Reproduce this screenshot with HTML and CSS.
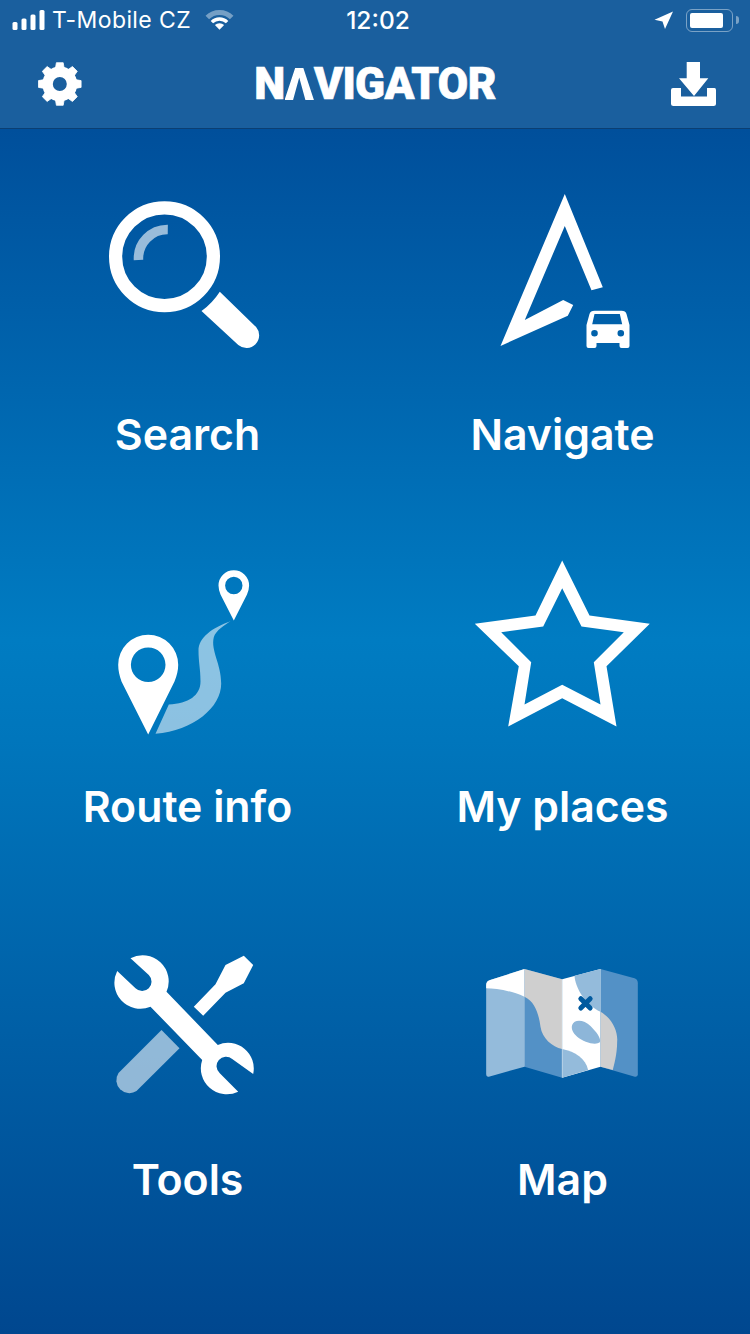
FILE: index.html
```html
<!DOCTYPE html>
<html lang="en">
<head>
	<meta charset="UTF-8">
	<title>Navigator</title>
	<link rel="stylesheet" href="styles.css">
</head>
<body>
<div class="top">
	<div class="status">
		<div class="status-left">
			<svg class="signal" width="36" height="24" viewBox="10 8 36 24">
				<rect x="12.5" y="22" width="5" height="8" rx="1.5"/>
				<rect x="21.5" y="18.5" width="5" height="11.5" rx="1.5"/>
				<rect x="30.5" y="14.5" width="5" height="15.5" rx="1.5"/>
				<rect x="39.5" y="10" width="5" height="20" rx="1.5"/>
			</svg>
			<span class="carrier">T-Mobile CZ</span>
			<svg class="wifi" width="32" height="24" viewBox="203 8 32 24">
				<path d="M206.3 17.5A17.2 17.2 0 0 1 230.7 17.5" fill="none" stroke="#fff" stroke-opacity=".4" stroke-width="5"/>
				<path d="M210.9 22.1A10.7 10.7 0 0 1 226.1 22.1" fill="none" stroke="#fff" stroke-width="3.4"/>
				<path d="M218.5 29.7L213.9 25.1A6.5 6.5 0 0 1 223.1 25.1Z" fill="#fff"/>
			</svg>
		</div>
		<span class="time">12:02</span>
		<div class="status-right">
			<svg width="20" height="20" viewBox="654 11 20 20">
				<path d="M673 12.5L654.5 20.8L662.5 22.5L665 30Z" fill="#fff"/>
			</svg>
			<div class="battery"><div class="battery-level"></div></div>
			<div class="battery-nub"></div>
		</div>
	</div>
	<div class="header">
		<svg class="gear" width="46" height="46" viewBox="37.5 58.7 46 46">
			<circle cx="60.3" cy="81.7" r="12.25" fill="none" stroke="#fff" stroke-width="10.5"/>
			<g fill="#fff" stroke="#fff" stroke-width=".8" stroke-linejoin="round">
				<path id="tooth" d="M56.9 60.4H63.7L65 68H55.6ZM56.9 103H63.7L65 95.4H55.6Z"/>
				<use href="#tooth" transform="rotate(45 60.3 81.7)"/>
				<use href="#tooth" transform="rotate(90 60.3 81.7)"/>
				<use href="#tooth" transform="rotate(135 60.3 81.7)"/>
			</g>
		</svg>
		<div class="logo">N<span class="logo-a">A</span>VIGATOR</div>
		<svg class="download" width="46" height="46" viewBox="671 60 46 46">
			<path d="M686.7 61H700V77.3H708.3L694 95L679 77.3H686.7Z" fill="#fff"/>
			<path d="M673 87H681V95.5H707V87H714.5Q716 87 716 89V102.5Q716 105 713.5 105H673.5Q671 105 671 102.5V89Q671 87 673 87Z" fill="#fff"/>
		</svg>
	</div>
</div>

<div class="menu">
	<div class="item">
		<svg class="icon" viewBox="87.5 165 200 200">
			<circle cx="164" cy="256.7" r="48.9" fill="none" stroke="#fff" stroke-width="13.2"/>
			<path d="M167.3 229.5A29 29 0 0 0 138 260" fill="none" stroke="#fff" stroke-opacity=".6" stroke-width="9.5"/>
			<path d="M219.3 291.7L255.6 327A12.7 12.7 0 0 1 237.8 345L201 311Q212 303 219.3 291.7Z" fill="#fff"/>
		</svg>
		<div class="label">Search</div>
	</div>
	<div class="item">
		<svg class="icon" viewBox="462.5 165 200 200">
			<path d="M564.3 194L602.3 287.3L591 290.3L564.3 226L524.3 320L562.7 300L572.7 305L567.3 315.7L500 346Z" fill="#fff"/>
			<path fill-rule="evenodd" fill="#fff" d="M594 310.7H621Q625 310.7 626 314L629 325V346Q629 348 627 348H621Q619 348 619 346V343H596V346Q596 348 594 348H588Q586 348 586 346V325L589 314Q590 310.7 594 310.7ZM594 314L591.7 324.3H621.7L619.3 314ZM590.7 333.3A3.3 3.3 0 1 0 597.3 333.3A3.3 3.3 0 1 0 590.7 333.3ZM617 333.3A3.3 3.3 0 1 0 623.6 333.3A3.3 3.3 0 1 0 617 333.3Z"/>
		</svg>
		<div class="label">Navigate</div>
	</div>
	<div class="item">
		<svg class="icon" viewBox="87.5 537.5 200 200">
			<path fill-rule="evenodd" fill="#fff" d="M117.7 664.3A30 30 0 1 1 177.7 664.3Q177.7 672 174 681L147.7 734L121 681Q117.7 672 117.7 664.3ZM130.4 664.3A17.3 17.3 0 1 0 165 664.3A17.3 17.3 0 1 0 130.4 664.3Z"/>
			<path fill-rule="evenodd" fill="#fff" d="M218 585A15.3 15.3 0 1 1 248.6 585Q248.6 589 246.5 594L233.3 620L220 594Q218 589 218 585ZM224.6 585A8.7 8.7 0 1 0 242 585A8.7 8.7 0 1 0 224.6 585Z"/>
			<path fill="#fff" fill-opacity=".55" d="M230 620.7C212 627 198 637 198 650C198 662 200 668 200 681C200 695 188 703 168.3 704L155 733.3C193 730 220.7 707 220.7 683C220.7 663 210 650 213.3 636.7C215 630 225 624 230 620.7Z"/>
		</svg>
		<div class="label">Route info</div>
	</div>
	<div class="item">
		<svg class="icon" viewBox="462.5 537.5 200 200">
			<path fill-rule="evenodd" fill="#fff" d="M561.7 560L589 615L649.3 623.3L606 665.7L616 726L561.7 697.7L507.7 726L518.3 665.7L474.3 623.3L535 615ZM561.7 587.7L542.7 626L500.7 631.7L530.7 661.7L524 704L561.7 684.3L600 704L593.3 661.7L623.3 631.7L581 626Z"/>
		</svg>
		<div class="label">My places</div>
	</div>
	<div class="item">
		<svg class="icon" viewBox="87.5 910 200 200">
			<path fill="#fff" d="M130 958.3A26 26 0 0 1 166 991.7L217.3 1045A25.7 25.7 0 0 1 252.7 1074L231.7 1059A7.5 7.5 0 0 0 219.3 1073.3L237.7 1091.7A26 26 0 0 1 201.7 1060L150 1006.7A26 26 0 0 1 116.7 971L135 988.3A7.5 7.5 0 0 0 148.3 975Z"/>
			<path fill="#fff" d="M243.3 955.7L252.7 965L243.3 983.3L225 992.7L202.7 1015.7L193.3 1006.7L215 984.3L225 965Z"/>
			<path fill="#fff" fill-opacity=".57" d="M161 1030L179 1048.3L136 1091A13 13 0 0 1 118 1073Z"/>
		</svg>
		<div class="label">Tools</div>
	</div>
	<div class="item">
		<svg class="icon" viewBox="462.5 910 200 200">
			<g transform="translate(475 955) scale(.3333)">
				<path fill="#94bbdb" d="M32 90Q32 78 44 75L147 42V335L40 365Q32 367 32 358Z"/>
				<path fill="#fff" d="M32 90Q32 78 44 75L147 42V125C100 105 60 100 32 100Z"/>
				<path fill="#5391c6" d="M147 42L260 73V368L147 335Z"/>
				<path fill="#cfcfcf" d="M147 42L260 73V282C230 275 200 250 195 215C190 180 180 140 147 125Z"/>
				<path fill="#fff" d="M260 73L375 42V335L260 368Z"/>
				<path fill="#94bbdb" d="M297 62L375 42V170C330 150 300 100 297 62Z"/>
				<path fill="#94bbdb" d="M260 282C300 290 330 310 338 345L260 368Z"/>
				<path fill="#5391c6" d="M375 42L477 70Q487 73 487 85V358Q487 367 478 365L375 335Z"/>
				<path fill="#cfcfcf" d="M375 170C410 190 428 230 425 260C425 300 415 330 412 345L375 335Z"/>
				<path d="M147 42V335M260 73V368M375 42V335" stroke="#fff" stroke-opacity=".3" stroke-width="3" fill="none"/>
				<path fill="#8db6d9" d="M290 210C296 192 325 193 345 213C362 230 378 250 373 262C360 272 325 262 305 245C293 235 286 222 290 210Z"/>
				<path d="M316 131L344 159M344 131L316 159" stroke="#005a9f" stroke-width="15" stroke-linecap="round"/>
			</g>
		</svg>
		<div class="label">Map</div>
	</div>
</div>
</body>
</html>
```

FILE: styles.css
```css
*{
	margin: 0;
	padding: 0;
	box-sizing: border-box;
}
body{
	width: 750px;
	height: 1334px;
	overflow: hidden;
	font-family: Inter, "Liberation Sans", sans-serif;
	color: #fff;
	background: linear-gradient(to bottom, #004f9b 129px, #007cc2 640px, #0076bc 740px, #00478f 1334px);
}
svg{
	display: block;
}
.top{
	height: 129px;
	background-color: #1a5f9e;
	border-bottom: 1px solid #0b3f73;
}
.status{
	height: 40px;
	display: grid;
	grid-template-columns: 1fr auto 1fr;
	align-items: center;
	padding: 0 11px 0 10px;
}
.status-left{
	display: flex;
	align-items: center;
}
.signal{
	fill: #fff;
}
.carrier{
	font-size: 23px;
	margin-left: 6px;
	letter-spacing: .4px;
}
.wifi{
	margin-left: 13px;
}
.time{
	font-size: 24.5px;
	font-weight: 500;
	margin-left: 7px;
}
.status-right{
	display: flex;
	align-items: center;
	justify-content: flex-end;
}
.battery{
	width: 47px;
	height: 23px;
	margin-left: 12px;
	padding: 3px;
	border: 1.5px solid rgba(255,255,255,.42);
	border-radius: 6px;
}
.battery-level{
	width: 33px;
	height: 100%;
	background-color: #fff;
	border-radius: 2px;
}
.battery-nub{
	width: 3px;
	height: 8px;
	margin-left: 3px;
	background-color: rgba(255,255,255,.42);
	border-radius: 0 3px 3px 0;
}
.header{
	height: 88px;
	display: grid;
	grid-template-columns: 1fr auto 1fr;
	align-items: center;
}
.gear{
	margin-left: 37px;
}
.download{
	justify-self: end;
	margin-right: 33px;
}
.logo{
	font-family: Roboto, "Liberation Sans", sans-serif;
	font-size: 44px;
	font-weight: 900;
	letter-spacing: -.6px;
	line-height: 88px;
	-webkit-text-stroke: .7px #fff;
}
/* the logo's first A has no crossbar */
.logo-a{
	position: relative;
	display: inline-block;
	color: transparent;
	-webkit-text-stroke: 0;
}
.logo-a::after{
	content: "";
	position: absolute;
	left: 0;
	right: 0;
	top: 28px;
	height: 32px;
	background-color: #fff;
	clip-path: polygon(36% 0, 64% 0, 100% 100%, 71% 100%, 50% 30%, 29% 100%, 0 100%);
}
.menu{
	display: grid;
	grid-template-columns: 375px 375px;
	grid-auto-rows: 372.5px;
	padding-top: 36px;
}
.item{
	display: flex;
	flex-direction: column;
	align-items: center;
}
.icon{
	width: 200px;
	height: 200px;
}
.label{
	margin-top: 44.5px;
	font-size: 42.8px;
	font-weight: 600;
	line-height: 50px;
}
```
